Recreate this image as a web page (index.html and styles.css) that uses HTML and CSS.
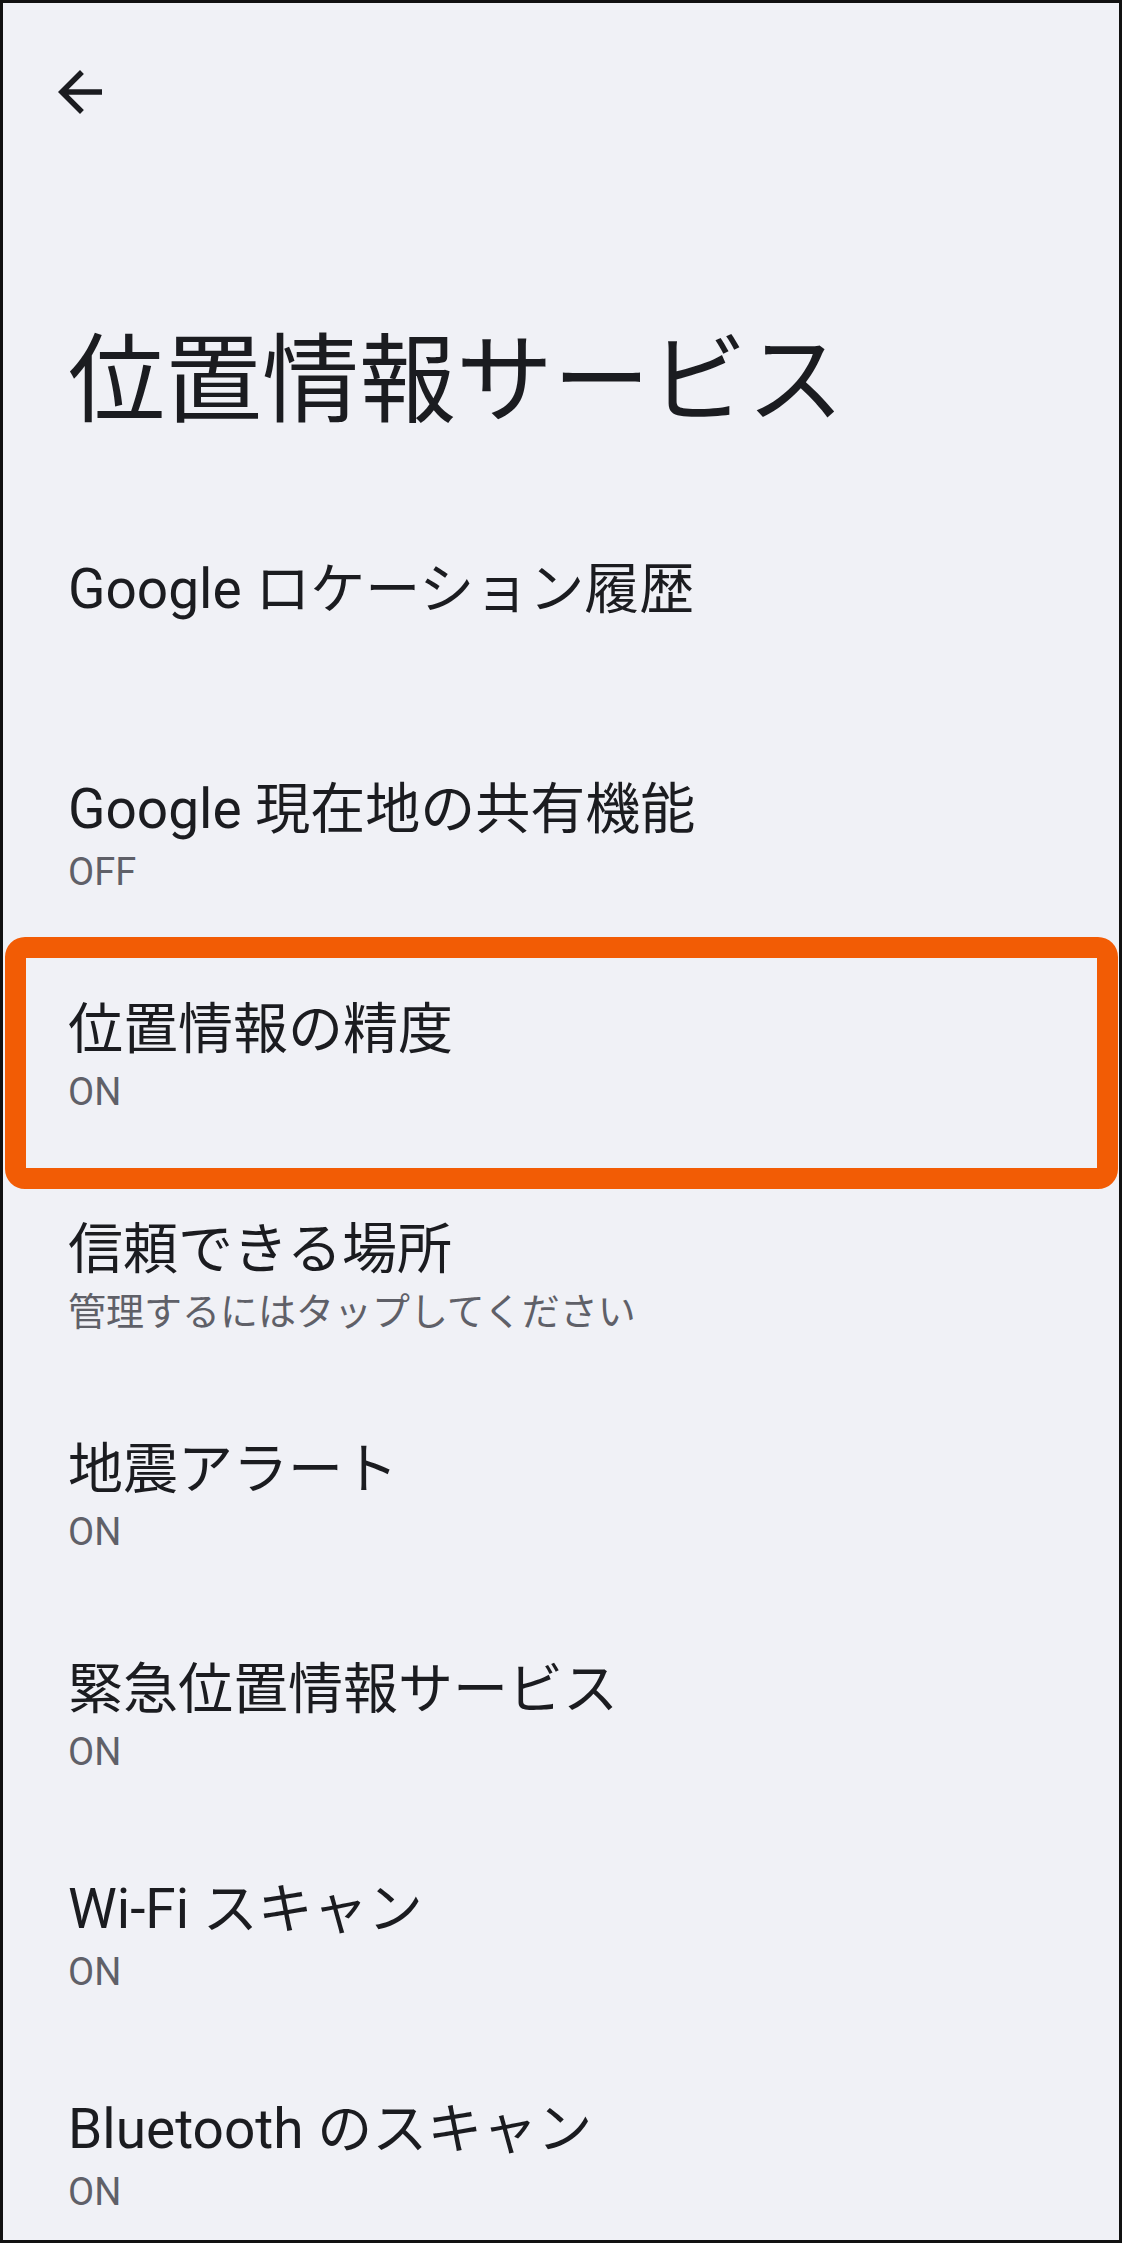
FILE: index.html
```html
<!DOCTYPE html>
<html lang="ja">
<head>
  <meta charset="utf-8">
  <title>位置情報サービス</title>
  <link rel="stylesheet" href="styles.css">
</head>
<body>
  <div class="screen">
    <div class="toolbar">
      <svg class="backIcon" viewBox="0 0 24 24" width="66" height="66">
        <path d="M20 11H7.83l5.59-5.59L12 4l-8 8 8 8 1.41-1.41L7.83 13H20v-2z"/>
      </svg>
    </div>

    <h1 class="pageTitle">位置情報サービス</h1>

    <div class="prefList">
      <div class="pref">
        <div class="prefTitle">Google ロケーション履歴</div>
      </div>
      <div class="pref">
        <div class="prefTitle">Google 現在地の共有機能</div>
        <div class="prefSummary">OFF</div>
      </div>
      <div class="pref marked">
        <div class="prefTitle">位置情報の精度</div>
        <div class="prefSummary">ON</div>
        <div class="highlight"></div>
      </div>
      <div class="pref">
        <div class="prefTitle">信頼できる場所</div>
        <div class="prefSummary">管理するにはタップしてください</div>
      </div>
      <div class="pref">
        <div class="prefTitle">地震アラート</div>
        <div class="prefSummary">ON</div>
      </div>
      <div class="pref">
        <div class="prefTitle">緊急位置情報サービス</div>
        <div class="prefSummary">ON</div>
      </div>
      <div class="pref">
        <div class="prefTitle">Wi-Fi スキャン</div>
        <div class="prefSummary">ON</div>
      </div>
      <div class="pref">
        <div class="prefTitle">Bluetooth のスキャン</div>
        <div class="prefSummary">ON</div>
      </div>
    </div>
  </div>
</body>
</html>
```

FILE: styles.css
```css
body {
  margin: 0;
  font-family: Roboto, "Noto Sans CJK JP", sans-serif;
  color: #1b1c20;
}

.screen {
  width: 1122px;
  height: 2243px;
  box-sizing: border-box;
  border: 3px solid #111;
  background-color: #f0f1f6;
  overflow: hidden;
}

.toolbar {
  height: 178px;
  padding-left: 44px;
  display: flex;
  align-items: center;
}

.backIcon {
  fill: #1b1c20;
}

.pageTitle {
  margin: 140px 0 64px 0;
  padding-left: 65px;
  font-size: 97px;
  line-height: 120px;
  font-weight: 400;
}

.pref {
  position: relative;
  height: 220px;
  box-sizing: border-box;
  padding: 47px 0 0 65px;
}

.prefTitle {
  font-size: 55px;
  line-height: 74px;
}

.prefSummary {
  font-size: 38px;
  line-height: 52px;
  color: #5f6068;
}

/* orange annotation frame round one row */
.highlight {
  position: absolute;
  left: 2px;
  top: -8px;
  width: 1113px;
  height: 252px;
  box-sizing: border-box;
  border: 21px solid #f25c05;
  border-radius: 20px;
}
```
